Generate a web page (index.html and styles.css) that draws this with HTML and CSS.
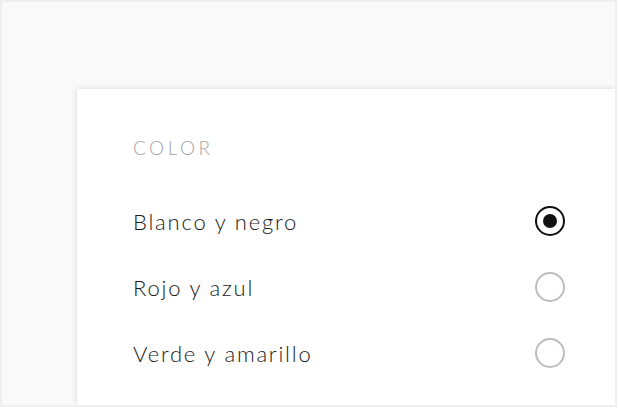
FILE: index.html
```html
<!DOCTYPE html>
<html lang="es">
<head>
<meta charset="utf-8">
<link rel="stylesheet" href="styles.css">
</head>
<body>
<div class="frame">
  <div class="card">
    <div class="title">COLOR</div>
    <div class="row"><span class="label">Blanco y negro</span><span class="radio checked"></span></div>
    <div class="row"><span class="label">Rojo y azul</span><span class="radio"></span></div>
    <div class="row"><span class="label">Verde y amarillo</span><span class="radio"></span></div>
  </div>
</div>
</body>
</html>
```

FILE: styles.css
```css
html, body {
  margin: 0;
  padding: 0;
  background: #ffffff;
}
.frame {
  width: 538px;
  height: 316px;
  border: 2px solid #efefef;
  background: #f9f9f9;
  overflow: hidden;
  padding: 87px 0 0 75px;
  box-sizing: content-box;
  display: flex;
  flex-direction: column;
}
.card {
  flex: 1;
  background: #ffffff;
  box-shadow: 0 0 6px rgba(0, 0, 0, 0.13);
  padding: 49px 50px 0 56px;
  font-family: Lato, "Liberation Sans", sans-serif;
  color: #1a1a1a;
}
.title {
  font-size: 19px;
  letter-spacing: 3.5px;
  color: #a5a5a5;
  line-height: 20px;
  height: 50px;
  font-weight: 300;
}
.row {
  display: flex;
  align-items: center;
  justify-content: space-between;
  height: 66px;
}
.label {
  font-size: 22px;
  letter-spacing: 1.8px;
  font-weight: 300;
}
.radio {
  width: 26px;
  height: 26px;
  border: 2px solid #bdbdbd;
  border-radius: 50%;
  box-sizing: content-box;
  display: flex;
  align-items: center;
  justify-content: center;
}
.radio.checked {
  border-color: #111111;
}
.radio.checked::after {
  content: "";
  width: 14px;
  height: 14px;
  border-radius: 50%;
  background: #111111;
}
```
